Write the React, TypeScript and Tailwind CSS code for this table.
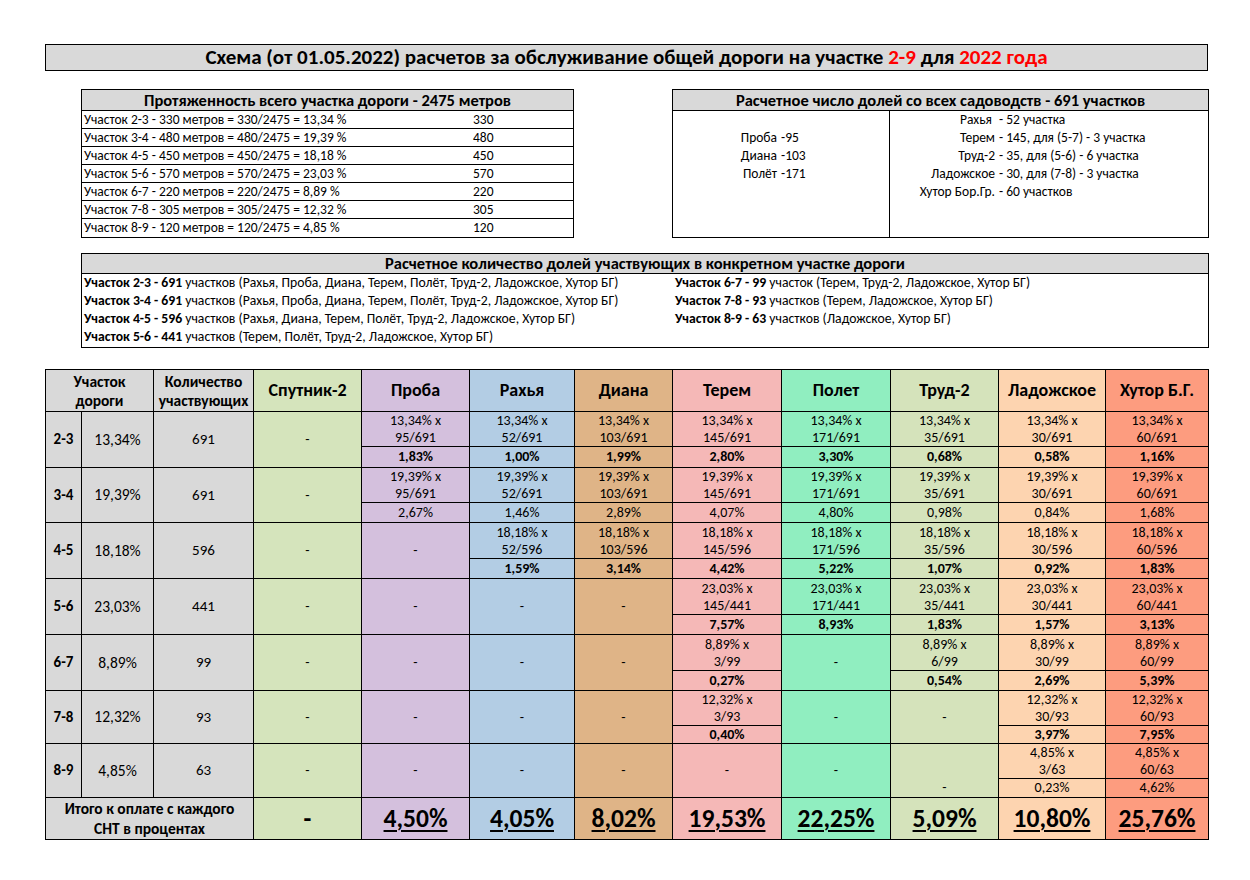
import React from 'react'

const font = { fontFamily: 'Carlito, Lato, "Noto Sans", sans-serif' }

type Cell = null | { f: string; r: string } | 'bottomDash'

interface RowData {
	code: string
	pct: string
	n: string
	fh: string
	rh: string
	bold: boolean
	cells: Cell[]
}

const cols = [
	{ name: 'Спутник-2', bg: 'bg-[#d5e4bc]' },
	{ name: 'Проба', bg: 'bg-[#d4c0dd]' },
	{ name: 'Рахья', bg: 'bg-[#b3cde4]' },
	{ name: 'Диана', bg: 'bg-[#dfb487]' },
	{ name: 'Терем', bg: 'bg-[#f5b8b7]' },
	{ name: 'Полет', bg: 'bg-[#90eec0]' },
	{ name: 'Труд-2', bg: 'bg-[#d5e3bb]' },
	{ name: 'Ладожское', bg: 'bg-[#fdd4b0]' },
	{ name: 'Хутор Б.Г.', bg: 'bg-[#fd9c7f]' },
]

const colWidths = [36, 72, 100, 108, 108, 105, 98, 109, 109, 108, 107, 103]

const rows: RowData[] = [
	{
		code: '2-3', pct: '13,34%', n: '691', fh: 'h-[35px]', rh: 'h-[21px]', bold: true,
		cells: [null, { f: '95/691', r: '1,83%' }, { f: '52/691', r: '1,00%' }, { f: '103/691', r: '1,99%' }, { f: '145/691', r: '2,80%' }, { f: '171/691', r: '3,30%' }, { f: '35/691', r: '0,68%' }, { f: '30/691', r: '0,58%' }, { f: '60/691', r: '1,16%' }],
	},
	{
		code: '3-4', pct: '19,39%', n: '691', fh: 'h-[35px]', rh: 'h-[20px]', bold: false,
		cells: [null, { f: '95/691', r: '2,67%' }, { f: '52/691', r: '1,46%' }, { f: '103/691', r: '2,89%' }, { f: '145/691', r: '4,07%' }, { f: '171/691', r: '4,80%' }, { f: '35/691', r: '0,98%' }, { f: '30/691', r: '0,84%' }, { f: '60/691', r: '1,68%' }],
	},
	{
		code: '4-5', pct: '18,18%', n: '596', fh: 'h-[36px]', rh: 'h-[20px]', bold: true,
		cells: [null, null, { f: '52/596', r: '1,59%' }, { f: '103/596', r: '3,14%' }, { f: '145/596', r: '4,42%' }, { f: '171/596', r: '5,22%' }, { f: '35/596', r: '1,07%' }, { f: '30/596', r: '0,92%' }, { f: '60/596', r: '1,83%' }],
	},
	{
		code: '5-6', pct: '23,03%', n: '441', fh: 'h-[36px]', rh: 'h-[20px]', bold: true,
		cells: [null, null, null, null, { f: '145/441', r: '7,57%' }, { f: '171/441', r: '8,93%' }, { f: '35/441', r: '1,83%' }, { f: '30/441', r: '1,57%' }, { f: '60/441', r: '3,13%' }],
	},
	{
		code: '6-7', pct: '8,89%', n: '99', fh: 'h-[36px]', rh: 'h-[20px]', bold: true,
		cells: [null, null, null, null, { f: '3/99', r: '0,27%' }, null, { f: '6/99', r: '0,54%' }, { f: '30/99', r: '2,69%' }, { f: '60/99', r: '5,39%' }],
	},
	{
		code: '7-8', pct: '12,32%', n: '93', fh: 'h-[34px]', rh: 'h-[18px]', bold: true,
		cells: [null, null, null, null, { f: '3/93', r: '0,40%' }, null, null, { f: '30/93', r: '3,97%' }, { f: '60/93', r: '7,95%' }],
	},
	{
		code: '8-9', pct: '4,85%', n: '63', fh: 'h-[35px]', rh: 'h-[19px]', bold: false,
		cells: [null, null, null, null, null, null, 'bottomDash', { f: '3/63', r: '0,23%' }, { f: '60/63', r: '4,62%' }],
	},
]

const totals = ['-', '4,50%', '4,05%', '8,02%', '19,53%', '22,25%', '5,09%', '10,80%', '25,76%']

const td = 'border border-black text-center align-middle p-0'

function SectionRows({ row }: { row: RowData }) {
	return (
		<>
			<tr className={row.fh}>
				<td rowSpan={2} className={`${td} bg-[#d9d9d9] font-bold text-[15px]`}>{row.code}</td>
				<td rowSpan={2} className={`${td} bg-[#d9d9d9] text-[15.5px]`}>{row.pct}</td>
				<td rowSpan={2} className={`${td} bg-[#d9d9d9] text-[15px]`}>{row.n}</td>
				{row.cells.map((c, i) => {
					const bg = cols[i].bg
					if (c === null) {
						return (
							<td key={i} rowSpan={2} className={`${td} ${bg} text-[14px]`}>
								-
							</td>
						)
					}
					if (c === 'bottomDash') {
						return (
							<td key={i} rowSpan={2} className={`border border-black text-center align-bottom p-0 ${bg} text-[14px] leading-[18px]`}>
								-
							</td>
						)
					}
					return (
						<td key={i} className={`${td} ${bg} text-[14px] leading-[17px]`}>
							<div>{row.pct} x</div>
							<div>{c.f}</div>
						</td>
					)
				})}
			</tr>
			<tr className={row.rh}>
				{row.cells.map((c, i) =>
					c === null || c === 'bottomDash' ? null : (
						<td key={i} className={`${td} ${cols[i].bg} text-[14px] leading-[16px] ${row.bold ? 'font-bold' : ''}`}>
							{c.r}
						</td>
					),
				)}
			</tr>
		</>
	)
}

export default function App() {
	return (
		<div className="w-[1250px] h-[880px] bg-white text-black pt-[44px] pl-[45px]" style={font}>
			{/* title */}
			<div className="w-[1163px] h-[27px] border border-black bg-[#d9d9d9] flex items-center justify-center text-[21px] leading-none font-bold">
				<span>
					Схема (от 01.05.2022) расчетов за обслуживание общей дороги на участке <span className="text-[#ff0000]">2-9</span> для{' '}
					<span className="text-[#ff0000]">2022 года</span>
				</span>
			</div>

			{/* top boxes */}
			<div className="flex mt-[18px] ml-[36px]">
				<div className="w-[493px] border border-black">
					<div className="h-[21px] bg-[#d9d9d9] border-b border-black flex items-center justify-center font-bold text-[16.5px] leading-none">
						Протяженность всего участка дороги - 2475 метров
					</div>
					{[
						['Участок 2-3 - 330 метров = 330/2475 = 13,34 %', '330'],
						['Участок 3-4 - 480 метров = 480/2475 = 19,39 %', '480'],
						['Участок 4-5 - 450 метров = 450/2475 = 18,18 %', '450'],
						['Участок 5-6 - 570 метров = 570/2475 = 23,03 %', '570'],
						['Участок 6-7 - 220 метров = 220/2475 = 8,89 %', '220'],
						['Участок 7-8 - 305 метров = 305/2475 = 12,32 %', '305'],
						['Участок 8-9 - 120 метров = 120/2475 = 4,85 %', '120'],
					].map(([t, n], i) => (
						<div key={i} className={`grid grid-cols-[389px_1fr] h-[18px] items-center text-[13.5px] leading-none pl-[2px] ${i < 6 ? 'border-b border-black' : ''}`}>
							<span>{t}</span>
							<span>{n}</span>
						</div>
					))}
				</div>

				<div className="w-[537px] ml-[98px] border border-black flex flex-col">
					<div className="h-[21px] bg-[#d9d9d9] border-b border-black flex items-center justify-center font-bold text-[16.5px] leading-none">
						Расчетное число долей со всех садоводств - 691 участков
					</div>
					<div className="flex flex-1 text-[13.5px] leading-none">
						<div className="w-[217px] border-r border-black pt-[18px]">
							{[
								['Проба', '-95'],
								['Диана', '-103'],
								['Полёт', '-171'],
							].map(([a, b]) => (
								<div key={a} className="flex h-[18px] items-center">
									<span className="w-[104px] text-right">{a}</span>
									<span className="pl-[4px]">{b}</span>
								</div>
							))}
						</div>
						<div className="flex-1">
							{[
								['Рахья ', '- 52 участка'],
								['Терем', '- 145, для (5-7) - 3 участка'],
								['Труд-2', '- 35, для (5-6) - 6 участка'],
								['Ладожское', '- 30, для (7-8) - 3 участка'],
								['Хутор Бор.Гр.', '- 60 участков'],
							].map(([a, b]) => (
								<div key={a} className="flex h-[18px] items-center">
									<span className="w-[105px] text-right whitespace-pre">{a}</span>
									<span className="pl-[4px]">{b}</span>
								</div>
							))}
						</div>
					</div>
				</div>
			</div>

			{/* participants box */}
			<div className="w-[1128px] ml-[36px] mt-[15px] border border-black h-[95px]">
				<div className="h-[20px] bg-[#d9d9d9] border-b border-black flex items-center justify-center font-bold text-[16.5px] leading-none">
					Расчетное количество долей участвующих в конкретном участке дороги
				</div>
				<div className="grid grid-cols-[593px_1fr] text-[13.7px] leading-none">
					<div className="pl-[2px]">
						{[
							['Участок 2-3 - 691', ' участков (Рахья, Проба, Диана, Терем, Полёт, Труд-2, Ладожское, Хутор БГ)'],
							['Участок 3-4 - 691', ' участков (Рахья, Проба, Диана, Терем, Полёт, Труд-2, Ладожское, Хутор БГ)'],
							['Участок 4-5 - 596', ' участков (Рахья, Диана, Терем, Полёт, Труд-2, Ладожское, Хутор БГ)'],
							['Участок 5-6 - 441', ' участков (Терем, Полёт, Труд-2, Ладожское, Хутор БГ)'],
						].map(([a, b]) => (
							<div key={a} className="h-[18px] flex items-center whitespace-pre">
								<span className="font-bold">{a}</span>
								<span>{b}</span>
							</div>
						))}
					</div>
					<div>
						{[
							['Участок 6-7 - 99', ' участок (Терем, Труд-2, Ладожское, Хутор БГ)'],
							['Участок 7-8 - 93', ' участков (Терем, Ладожское, Хутор БГ)'],
							['Участок 8-9 - 63', ' участков (Ладожское, Хутор БГ)'],
						].map(([a, b]) => (
							<div key={a} className="h-[18px] flex items-center whitespace-pre">
								<span className="font-bold">{a}</span>
								<span>{b}</span>
							</div>
						))}
					</div>
				</div>
			</div>

			{/* main table */}
			<table className="mt-[21px] border-collapse table-fixed w-[1164px]">
				<colgroup>
					{colWidths.map((w, i) => (
						<col key={i} style={{ width: w }} />
					))}
				</colgroup>
				<tbody>
					<tr className="h-[42px]">
						<td colSpan={2} className={`${td} bg-[#d9d9d9] font-bold text-[15.5px] leading-[19px]`}>
							Участок
							<br />
							дороги
						</td>
						<td className={`${td} bg-[#d9d9d9] font-bold text-[15.5px] leading-[19px]`}>
							Количество
							<br />
							участвующих
						</td>
						{cols.map((c) => (
							<td key={c.name} className={`${td} ${c.bg} font-bold text-[18px]`}>
								{c.name}
							</td>
						))}
					</tr>
					{rows.map((r) => (
						<SectionRows key={r.code} row={r} />
					))}
					<tr className="h-[42px]">
						<td colSpan={3} className={`${td} bg-[#d9d9d9] font-bold text-[15.5px] leading-[20px]`}>
							Итого к оплате с каждого
							<br />
							СНТ в процентах
						</td>
						{totals.map((t, i) => (
							<td key={i} className={`${td} ${cols[i].bg} font-bold text-[25.5px] leading-none`}>
								<span className={i === 0 ? '' : 'underline decoration-2 underline-offset-[3px]'}>{t}</span>
							</td>
						))}
					</tr>
				</tbody>
			</table>
		</div>
	)
}
